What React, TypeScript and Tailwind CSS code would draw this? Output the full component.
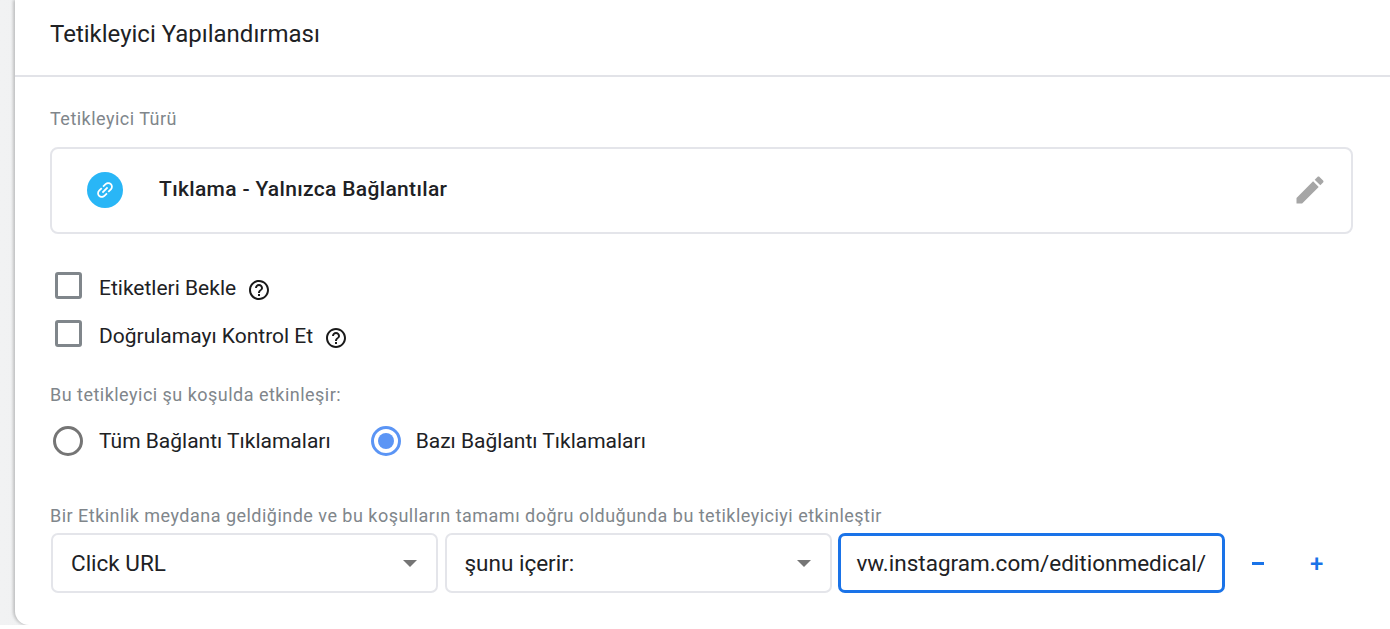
const HelpIcon = () => (
  <svg width="24" height="24" viewBox="0 0 24 24" fill="#1a1a1a">
    <path d="M11 18h2v-2h-2v2zm1-16C6.48 2 2 6.48 2 12s4.48 10 10 10 10-4.48 10-10S17.52 2 12 2zm0 18c-4.41 0-8-3.59-8-8s3.59-8 8-8 8 3.59 8 8-3.59 8-8 8zm0-14c-2.21 0-4 1.79-4 4h2c0-1.1.9-2 2-2s2 .9 2 2c0 2-3 1.75-3 5h2c0-2.25 3-2.5 3-5 0-2.21-1.79-4-4-4z" />
  </svg>
);

const Caret = () => <div className="w-0 h-0 border-x-[7.5px] border-x-transparent border-t-[7px] border-t-[#757575]" />;

const Select = ({ value }: { value: string }) => (
  <div className="w-[387px] h-[60px] shrink-0 flex items-center justify-between pl-[18px] pr-[19px] bg-white border-2 border-[#e4e5ea] rounded-[7px] text-[22.5px] text-[#202124]">
    <span className="mt-[2px]">{value}</span>
    <Caret />
  </div>
);

const CheckRow = ({ label }: { label: string }) => (
  <div className="flex items-center h-[36px] pl-[5px] text-[21px] text-[#202124]">
    <div className="mb-[6px] w-[27px] h-[27px] border-[3px] border-[#80868b] rounded-[3px]" />
    <span className="ml-[17px] mt-[2px]">{label}</span>
    <span className="ml-[11px] mt-[4px]"><HelpIcon /></span>
  </div>
);

export default function App() {
  return (
    <div className="h-[629px] w-[1390px] overflow-hidden bg-white font-['Roboto',sans-serif]">
      <div className="h-[625px] overflow-hidden bg-gradient-to-r from-[#f1f2f3] to-[#d5d7d9] pl-[15px]">
        <div className="h-[625px] bg-white rounded-bl-[14px] shadow-[-2px_0_3px_rgba(0,0,0,0.2)]">
          <div className="h-[77px] border-b-2 border-[#e2e3e8] pl-[35px] pt-[18px] text-[24px] leading-[32px] text-[#202124]">
            Tetikleyici Yapılandırması
          </div>
          <div className="pl-[35px] pr-[37px]">
            <div className="pt-[32px] text-[18px] leading-[20px] tracking-[0.48px] text-[#80868b]">Tetikleyici Türü</div>
            <div className="mt-[18px] h-[87px] flex items-center pb-[2px] pl-[35px] pr-[23px] border-2 border-[#e4e5ea] rounded-[8px]">
              <div className="w-[36px] h-[36px] rounded-full bg-[#29b6f6] flex items-center justify-center">
                <svg width="22" height="22" viewBox="0 0 24 24" fill="#fff" className="-rotate-45">
                  <path d="M3.9 12c0-1.71 1.39-3.1 3.1-3.1h4V7H7c-2.76 0-5 2.24-5 5s2.24 5 5 5h4v-1.9H7c-1.71 0-3.1-1.39-3.1-3.1zM8 13h8v-2H8v2zm9-6h-4v1.9h4c1.71 0 3.1 1.39 3.1 3.1s-1.39 3.1-3.1 3.1h-4V17h4c2.76 0 5-2.24 5-5s-2.24-5-5-5z" />
                </svg>
              </div>
              <div className="ml-[36px] text-[21px] font-medium tracking-[0.33px] text-[#202124]">Tıklama - Yalnızca Bağlantılar</div>
              <svg width="36" height="36" viewBox="0 0 24 24" fill="#a6a6a6" className="ml-auto">
                <path d="M3 17.25V21h3.75L17.81 9.94l-3.75-3.75L3 17.25zM20.71 7.04c.39-.39.39-1.02 0-1.41l-2.34-2.34c-.39-.39-1.02-.39-1.41 0l-1.83 1.83 3.75 3.75 1.83-1.83z" />
              </svg>
            </div>

            <div className="mt-[36px] flex flex-col gap-[12px]">
              <CheckRow label="Etiketleri Bekle" />
              <CheckRow label="Doğrulamayı Kontrol Et" />
            </div>

            <div className="mt-[31px] text-[18px] leading-[20px] tracking-[0.48px] text-[#80868b]">Bu tetikleyici şu koşulda etkinleşir:</div>
            <div className="mt-[20px] flex items-center h-[32px] pl-[3px] text-[21px] text-[#202124]">
              <div className="w-[30px] h-[30px] border-[3px] border-[#757575] rounded-full" />
              <span className="ml-[16px] mt-[2px]">Tüm Bağlantı Tıklamaları</span>
              <div className="ml-[40px] w-[30px] h-[30px] border-[3px] border-[#5b95f5] rounded-full flex items-center justify-center">
                <div className="w-[16px] h-[16px] rounded-full bg-[#5b95f5]" />
              </div>
              <span className="ml-[15px] mt-[2px]">Bazı Bağlantı Tıklamaları</span>
            </div>

            <div className="mt-[49px] text-[18px] leading-[20px] tracking-[0.48px] text-[#80868b]">Bir Etkinlik meydana geldiğinde ve bu koşulların tamamı doğru olduğunda bu tetikleyiciyi etkinleştir</div>
            <div className="mt-[7px] flex items-center gap-[6.5px] pl-[1px]">
              <Select value="Click URL" />
              <Select value="şunu içerir:" />
              <div className="w-[387px] h-[60px] shrink-0 flex items-center justify-end overflow-hidden pr-[16px] bg-white border-[3px] border-[#1a73e8] rounded-[7px] text-[22.5px] text-[#202124]">
                <span className="mt-[2px] whitespace-nowrap">vw.instagram.com/editionmedical/</span>
              </div>
              <div className="ml-[20px] w-[12px] h-[3px] bg-[#1a73e8]" />
              <div className="ml-[40px] mt-[2px] text-[24px] leading-none font-medium text-[#1a73e8]">+</div>
            </div>
          </div>
        </div>
      </div>
    </div>
  );
}
